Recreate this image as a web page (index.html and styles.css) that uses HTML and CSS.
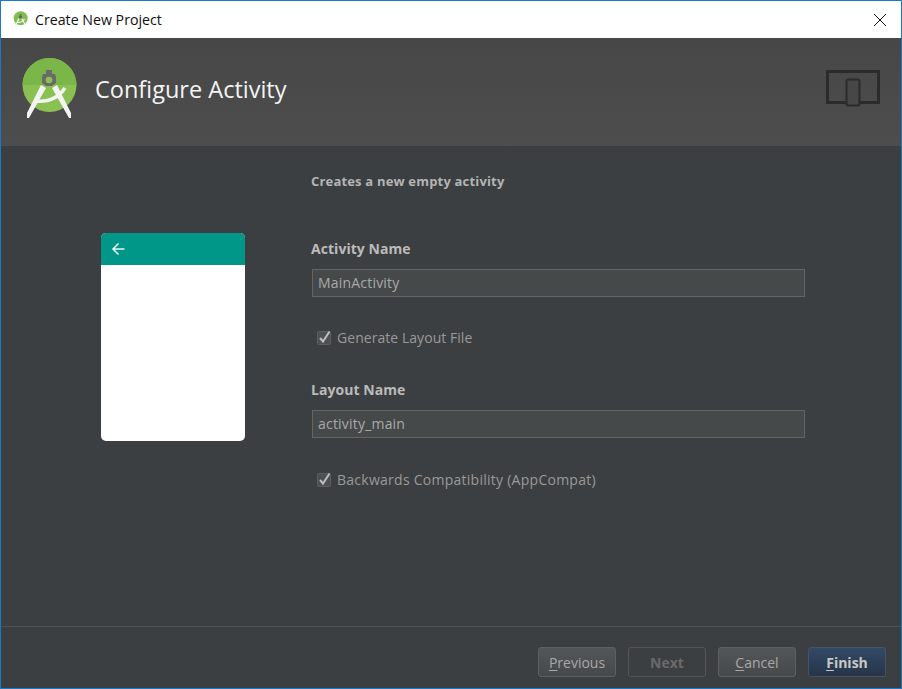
FILE: index.html
```html
<!DOCTYPE html>
<html lang="en">
<head>
<meta charset="utf-8">
<title>Create New Project</title>
<link rel="stylesheet" href="styles.css">
</head>
<body>
<div class="window">
  <div class="titlebar">
    <svg class="app-icon" width="15" height="16" viewBox="0 0 56 62">
      <circle cx="28.500" cy="28" r="27" fill="#7fbd4c"/>
      <path d="M20 28 L25 31 L8 61 L6 61 L6 56Z M36 28 L31 31 L48 61 L50 61 L50 56Z" fill="#f3f3f3"/>
      <path d="M14 44 Q34 46 44 31" stroke="#f3f3f3" stroke-width="5" fill="none"/>
      <path d="M25 13 H31 V17 L34 19 V28 H22 V19 L25 17Z" fill="#666"/>
    </svg>
    <span class="title">Create New Project</span>
    <svg class="close" width="14" height="14" viewBox="0 0 14 14"><path d="M1 1 L13 13 M13 1 L1 13" stroke="#111" stroke-width="1" fill="none"/></svg>
  </div>
  <header class="banner">
    <svg class="logo" width="56" height="62" viewBox="0 0 56 62">
      <circle cx="28.500" cy="28" r="27" fill="#8bc152"/>
      <path d="M1.500 28 A27 27 0 0 1 55.500 28Z" fill="#7ab648"/>
      <path d="M20 28 L25 31 L8 61 L6 61 L6 56Z M36 28 L31 31 L48 61 L50 61 L50 56Z" fill="#f3f3f3"/>
      <path d="M14 44 Q34 46 44 31" stroke="#f3f3f3" stroke-width="3.500" fill="none"/>
      <path d="M25 13 H31 V17 H34 L35 20 V26 L31 29 H25 L21 26 V20 L22 17 H25Z" fill="#6a6a6a"/>
      <circle cx="28" cy="23" r="3.300" fill="#8bc152"/>
    </svg>
    <h1 class="heading">Configure Activity</h1>
    <svg class="devices" width="54" height="37" viewBox="0 0 54 37">
      <path d="M20 32.500 H1.500 V1.500 H52.500 V32.500 H34" fill="none" stroke="#2b2b2b" stroke-width="3"/>
      <rect x="20.500" y="9.500" width="13" height="26" rx="1.500" fill="#474747" stroke="#2b2b2b" stroke-width="2"/>
    </svg>
  </header>
  <main class="content">
    <div class="preview">
      <div class="appbar">
        <svg width="14" height="14" viewBox="0 0 14 14"><path d="M13.500 7 H2 M7.500 1.500 L2 7 L7.500 12.500" stroke="#e6f4f2" stroke-width="1.600" fill="none"/></svg>
      </div>
    </div>
    <form class="form">
      <p class="desc">Creates a new empty activity</p>
      <label class="label label-first">Activity Name</label>
      <div class="input">MainActivity</div>
      <div class="check">
        <svg class="box" width="14" height="15" viewBox="0 0 14 15"><rect x="0.500" y="1.500" width="13" height="13" rx="1" fill="#4d5052" stroke="#5c5f61"/><path d="M3 8 L6 11.500 L12.500 1.500" stroke="#bdbdbd" stroke-width="2" fill="none"/></svg>
        <span>Generate Layout File</span>
      </div>
      <label class="label">Layout Name</label>
      <div class="input">activity_main</div>
      <div class="check check-wide">
        <svg class="box" width="14" height="15" viewBox="0 0 14 15"><rect x="0.500" y="1.500" width="13" height="13" rx="1" fill="#4d5052" stroke="#5c5f61"/><path d="M3 8 L6 11.500 L12.500 1.500" stroke="#bdbdbd" stroke-width="2" fill="none"/></svg>
        <span>Backwards Compatibility (AppCompat)</span>
      </div>
    </form>
  </main>
  <footer class="footer">
    <button class="btn" type="button"><u>P</u>revious</button>
    <button class="btn btn-disabled" type="button">Next</button>
    <button class="btn" type="button"><u>C</u>ancel</button>
    <button class="btn btn-primary" type="button"><u>F</u>inish</button>
  </footer>
</div>
</body>
</html>
```
FILE: styles.css
```css
* { box-sizing: border-box; }
html, body { margin: 0; padding: 0; }
body { width: 902px; height: 689px; overflow: hidden; font-family: "Open Sans", "Noto Sans", sans-serif; }
.window {
  width: 902px; height: 689px;
  border: 1px solid #1a79c4;
  background: #3c3f41;
  display: flex; flex-direction: column;
}
.titlebar {
  height: 37px; flex: none;
  background: #fff;
  display: flex; align-items: center;
  padding: 0 14px 0 12px;
  color: #111;
}
.app-icon { flex: none; margin-top: -2px; }
.title { margin-left: 7px; font-size: 14.2px; flex: 1; }
.close { flex: none; }
.banner {
  height: 108px; flex: none;
  background: linear-gradient(#474747, #4d4d4d);
  display: flex; align-items: center;
  padding: 0 21px 0 20px;
}
.logo { flex: none; margin-bottom: 8px; }
.heading {
  margin: 0 0 6px 18px; flex: 1;
  font-size: 23.5px; font-weight: 400; color: #f4f4f4;
}
.devices { flex: none; margin-bottom: 7px; }
.content {
  flex: 1;
  display: flex;
  padding: 87px 0 0 100px;
}
.preview {
  width: 144px; height: 208px; flex: none;
  background: #fff; border-radius: 5px;
  overflow: hidden;
}
.appbar {
  height: 32px; background: #009688;
  display: flex; align-items: center;
  padding-left: 10px;
}
.form {
  margin: -87px 0 0 66px;
  width: 494px;
  display: flex; flex-direction: column;
  color: #bbb;
}
.desc { margin: 26px 0 0; font-size: 13px; line-height: 18px; font-weight: 700; color: #b4b4b4; letter-spacing: 0.18px; }
.label { display: block; margin-top: 33px; font-size: 14px; line-height: 20px; font-weight: 700; color: #bbb; letter-spacing: 0.05px; }
.label-first { margin-top: 49px; }
.input {
  margin-top: 10px; margin-left: 1px;
  height: 28px; width: 493px;
  border: 1px solid #646464;
  background: #45494a;
  padding-left: 5px;
  font-size: 14px; line-height: 26px;
  color: #a9a9a9;
  letter-spacing: 0.2px;
}
.check {
  margin-top: 30px; margin-left: 6px;
  display: flex; align-items: center; gap: 6px;
  height: 20px;
  font-size: 14px; color: #999;
  letter-spacing: 0.05px;
}
.check-wide { margin-top: 31px; letter-spacing: 0.26px; }
.box { flex: none; }
.footer {
  height: 62px; flex: none;
  border-top: 1px solid #515151;
  display: flex; justify-content: flex-end; align-items: flex-start; gap: 12px;
  padding: 20px 15px 0 0;
}
.btn {
  width: 78px; height: 30px;
  border: 1px solid #5e6060; border-radius: 3px;
  background: linear-gradient(#525657, #46494b);
  color: #a8a8a8;
  font: 400 14px "Open Sans", "Noto Sans", sans-serif;
  padding: 0;
}
.btn u { text-underline-offset: 2px; }
.btn-disabled { background: #3c3f41; border-color: #555; color: #6a6a6a; font-weight: 700; }
.btn-primary { background: linear-gradient(#324a68, #263447); border-color: #4a5361; color: #c8c8c8; font-weight: 700; }
```
